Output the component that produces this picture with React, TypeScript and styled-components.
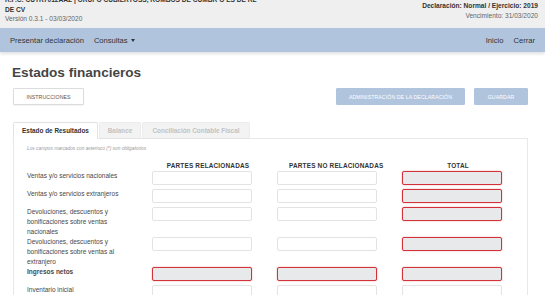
import React from 'react';
import styled, { createGlobalStyle } from 'styled-components';

const GlobalStyle = createGlobalStyle`
  html, body {
    margin: 0;
    padding: 0;
    background: #ffffff;
    font-family: "Liberation Sans", Arial, sans-serif;
    color: #333333;
  }
`;

const Page = styled.div`
  width: 545px;
  height: 295px;
  overflow: hidden;
  background: #ffffff;
`;

const TopHeader = styled.header`
  height: 28px;
  background: #efefef;
  display: flex;
  justify-content: space-between;
  padding: 0 7px 0 5px;
  overflow: hidden;
`;

const TaxpayerBlock = styled.div`
  margin-top: -5px;
  font-size: 6.6px;
  line-height: 9.5px;
`;

const StrongLine = styled.div`
  font-weight: bold;
  color: #333;
`;

const SoftLine = styled.div<{ $align?: string }>`
  color: #666;
  text-align: ${(p) => p.$align || 'left'};
`;

const DeclarationBlock = styled.div`
  margin-top: 1px;
  font-size: 6.6px;
  line-height: 10px;
  text-align: right;
`;

const NavBar = styled.nav`
  height: 24px;
  background: #b0c4de;
  display: flex;
  align-items: center;
  justify-content: space-between;
  padding: 0 10px;
  box-shadow: 0 2px 3px rgba(0, 0, 0, 0.12);
  font-size: 7.6px;
  color: #333;
`;

const NavGroup = styled.div`
  display: flex;
  align-items: center;
  gap: 10px;
`;

const NavLink = styled.span`
  display: inline-flex;
  align-items: center;
  gap: 2px;
`;

const Caret = styled.span`
  width: 0;
  height: 0;
  border-left: 2.5px solid transparent;
  border-right: 2.5px solid transparent;
  border-top: 3px solid #333;
  margin-left: 1px;
`;

const Content = styled.main`
  padding: 13px 17px 0 13px;
`;

const Title = styled.h1`
  margin: 0 0 7px -1px;
  font-size: 13.6px;
  font-weight: bold;
  color: #454545;
  line-height: 16px;
`;

const Toolbar = styled.div`
  display: flex;
  align-items: center;
`;

const Button = styled.button<{ $primary?: boolean; $width: number }>`
  width: ${(p) => p.$width}px;
  height: 17px;
  padding: 0;
  border: 1px solid ${(p) => (p.$primary ? '#b0c4de' : '#dcdcdc')};
  background: ${(p) => (p.$primary ? '#b0c4de' : '#ffffff')};
  color: ${(p) => (p.$primary ? '#ffffff' : '#555')};
  font-family: "Liberation Sans", Arial, sans-serif;
  font-size: 5.2px;
  letter-spacing: 0.1px;
  border-radius: 1px;
  box-shadow: ${(p) => (p.$primary ? 'none' : '0 1px 1px rgba(0,0,0,0.05)')};
`;

const Spacer = styled.div`
  flex: 1;
`;

const ButtonGap = styled.div`
  width: 9px;
`;

const Tabs = styled.div`
  display: flex;
  margin-top: 17px;
  height: 17px;
`;

const Tab = styled.div<{ $active?: boolean; $width: number }>`
  width: ${(p) => p.$width}px;
  display: flex;
  align-items: center;
  justify-content: center;
  font-size: 6.4px;
  font-weight: bold;
  box-sizing: border-box;
  color: ${(p) => (p.$active ? '#333' : '#c2c2c2')};
  background: ${(p) => (p.$active ? '#ffffff' : '#f3f3f3')};
  border: 1px solid ${(p) => (p.$active ? '#e2e2e2' : '#ececec')};
  border-bottom: ${(p) => (p.$active ? '1px solid #ffffff' : '1px solid #e2e2e2')};
  border-radius: 2px 2px 0 0;
  margin-right: 1px;
  position: relative;
  z-index: 1;
`;

const Panel = styled.section`
  border: 1px solid #e8e8e8;
  margin-top: -1px;
  height: 200px;
  padding: 7px 0 0 13px;
`;

const Note = styled.p`
  margin: 0 0 10px 0;
  font-size: 4.8px;
  font-style: italic;
  color: #999;
`;

const Grid = styled.div`
  display: grid;
  grid-template-columns: 100px 100px 100px 100px;
  column-gap: 25px;
  align-items: start;
`;

const ColHead = styled.div`
  font-size: 6.4px;
  font-weight: bold;
  text-align: center;
  color: #333;
  letter-spacing: 0.2px;
  line-height: 9px;
  margin-bottom: 1px;
  padding-left: 12px;
  white-space: nowrap;
`;

const Label = styled.div<{ $bold?: boolean }>`
  font-size: 6.5px;
  line-height: 10px;
  color: #484848;
  font-weight: ${(p) => (p.$bold ? 'bold' : 'normal')};
  padding-right: 4px;
`;

const Field = styled.div<{ $total?: boolean }>`
  height: 14px;
  box-sizing: border-box;
  margin-bottom: 4px;
  border-radius: 2px;
  border: 1px solid ${(p) => (p.$total ? '#d2333a' : '#e3e3e3')};
  background: ${(p) => (p.$total ? '#e8e9eb' : '#ffffff')};
  box-shadow: ${(p) => (p.$total ? '0 0 1.5px rgba(220, 40, 40, 0.55)' : 'none')};
`;

type Row = { label: string; bold?: boolean; cells: [boolean, boolean, boolean] };

const rows: Row[] = [
  { label: 'Ventas y/o servicios nacionales', cells: [false, false, true] },
  { label: 'Ventas y/o servicios extranjeros', cells: [false, false, true] },
  {
    label: 'Devoluciones, descuentos y bonificaciones sobre ventas nacionales',
    cells: [false, false, true],
  },
  {
    label: 'Devoluciones, descuentos y bonificaciones sobre ventas al extranjero',
    cells: [false, false, true],
  },
  { label: 'Ingresos netos', bold: true, cells: [true, true, true] },
  { label: 'Inventario inicial', cells: [false, false, false] },
];

export default function App() {
  return (
    <Page>
      <GlobalStyle />
      <TopHeader>
        <TaxpayerBlock>
          <StrongLine>R.F.C: CUTR7012AAZ | GRUPO CUBIERTOSS, ROMBOS DE CUMBR O ES DE RL</StrongLine>
          <StrongLine>DE CV</StrongLine>
          <SoftLine>Versión 0.3.1 - 03/03/2020</SoftLine>
        </TaxpayerBlock>
        <DeclarationBlock>
          <StrongLine>Declaración: Normal / Ejercicio: 2019</StrongLine>
          <SoftLine $align="right">Vencimiento: 31/03/2020</SoftLine>
        </DeclarationBlock>
      </TopHeader>

      <NavBar>
        <NavGroup>
          <NavLink>Presentar declaración</NavLink>
          <NavLink>
            Consultas
            <Caret />
          </NavLink>
        </NavGroup>
        <NavGroup>
          <NavLink>Inicio</NavLink>
          <NavLink>Cerrar</NavLink>
        </NavGroup>
      </NavBar>

      <Content>
        <Title>Estados financieros</Title>
        <Toolbar>
          <Button $width={71}>INSTRUCCIONES</Button>
          <Spacer />
          <Button $primary $width={129}>ADMINISTRACIÓN DE LA DECLARACIÓN</Button>
          <ButtonGap />
          <Button $primary $width={54}>GUARDAR</Button>
        </Toolbar>

        <Tabs>
          <Tab $active $width={85}>Estado de Resultados</Tab>
          <Tab $width={42}>Balance</Tab>
          <Tab $width={108}>Conciliación Contable Fiscal</Tab>
        </Tabs>

        <Panel>
          <Note>Los campos marcados con asterisco (*) son obligatorios</Note>
          <Grid>
            <div />
            <ColHead>PARTES RELACIONADAS</ColHead>
            <ColHead>PARTES NO RELACIONADAS</ColHead>
            <ColHead>TOTAL</ColHead>
            {rows.map((r) => (
              <React.Fragment key={r.label}>
                <Label $bold={r.bold}>{r.label}</Label>
                {r.cells.map((t, i) => (
                  <Field key={i} $total={t} />
                ))}
              </React.Fragment>
            ))}
          </Grid>
        </Panel>
      </Content>
    </Page>
  );
}
